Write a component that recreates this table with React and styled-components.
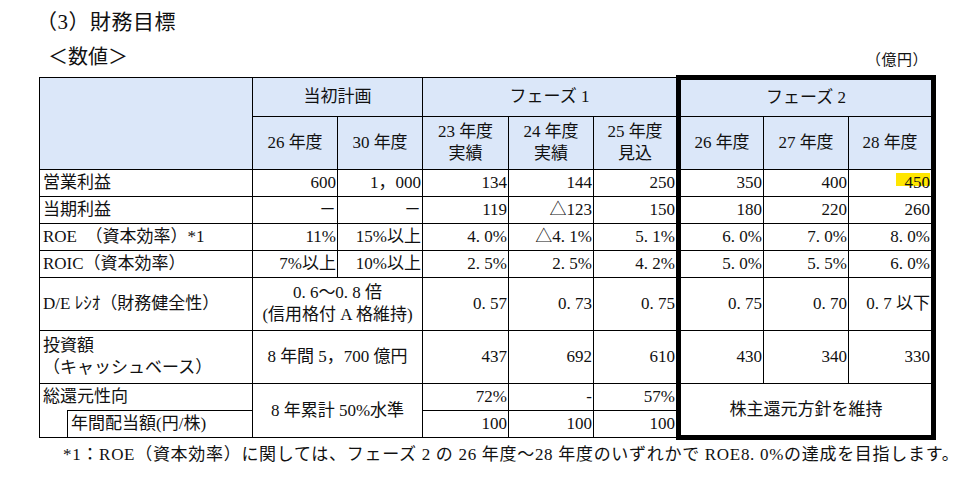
import React from "react";
import styled, { createGlobalStyle, css } from "styled-components";

const Global = createGlobalStyle`
  html, body { margin: 0; padding: 0; background: #fff; }
  body {
    font-family: "Liberation Serif", "Noto Sans CJK JP", serif;
    color: #111;
  }
`;

const Page = styled.div`
  width: 979px;
  height: 488px;
  box-sizing: border-box;
  padding-top: 10px;
  overflow: hidden;
`;

const Title = styled.h2`
  margin: 0 0 0 36px;
  font-weight: normal;
  font-size: 21px;
  line-height: 24px;
  letter-spacing: 0.5px;
`;

const SubRow = styled.div`
  display: flex;
  align-items: flex-end;
  justify-content: space-between;
  margin: 11px 51px 0 48px;
  height: 30px;
`;

const SubTitle = styled.div`
  font-size: 20px;
  line-height: 24px;
  padding-bottom: 6px;
`;

const Unit = styled.div`
  font-size: 15px;
  line-height: 18px;
  padding-bottom: 6px;
  letter-spacing: 0.5px;
`;

const Table = styled.table`
  margin: 0 0 0 39px;
  border-collapse: collapse;
  table-layout: fixed;
  font-size: 17px;
  line-height: 22px;
`;

const thick = css`
  ${(p) => p.$tl && "border-left: 5px solid #000;"}
  ${(p) => p.$tr && "border-right: 5px solid #000;"}
  ${(p) => p.$tt && "border-top: 5px solid #000;"}
  ${(p) => p.$tb && "border-bottom: 5px solid #000;"}
`;

const Th = styled.th`
  background: #dbe7f9;
  border: 1px solid #000;
  font-weight: normal;
  text-align: center;
  padding: 0;
  height: ${(p) => p.$h || 38}px;
  box-sizing: border-box;
  ${thick}
`;

const Td = styled.td`
  border: 1px solid #000;
  padding: 0 ${(p) => (p.$align === "left" ? 3 : 1)}px 0 ${(p) => (p.$align === "left" ? 3 : 1)}px;
  text-align: ${(p) => p.$align || "right"};
  height: ${(p) => p.$h || 26}px;
  white-space: nowrap;
  vertical-align: middle;
  ${(p) => p.$nb && "border-bottom: none;"}
  ${(p) => p.$nt && "border-top: none;"}
  ${thick}
`;

const Highlight = styled.span`
  padding-left: 9px;
  background: linear-gradient(#ffe600 0 68%, transparent 68%);
`;

const Note = styled.p`
  margin: 5px 0 0 63px;
  font-size: 17px;
  line-height: 20px;
  letter-spacing: 0.7px;
`;

const cols = [28, 185, 85, 85, 86, 85, 85, 85, 85, 85];

export default function App() {
  return (
    <Page>
      <Global />
      <Title>（3）財務目標</Title>
      <SubRow>
        <SubTitle>＜数値＞</SubTitle>
        <Unit>（億円）</Unit>
      </SubRow>
      <Table>
        <colgroup>
          {cols.map((w, i) => (
            <col key={i} style={{ width: w }} />
          ))}
        </colgroup>
        <thead>
          <tr>
            <Th colSpan={2} rowSpan={2} />
            <Th colSpan={2} $h={39}>当初計画</Th>
            <Th colSpan={3} $h={39}>フェーズ 1</Th>
            <Th colSpan={3} $h={39} $tt $tl $tr>フェーズ 2</Th>
          </tr>
          <tr>
            <Th $h={53}>26 年度</Th>
            <Th $h={53}>30 年度</Th>
            <Th $h={53}>23 年度<br />実績</Th>
            <Th $h={53}>24 年度<br />実績</Th>
            <Th $h={53}>25 年度<br />見込</Th>
            <Th $h={53} $tl>26 年度</Th>
            <Th $h={53}>27 年度</Th>
            <Th $h={53} $tr>28 年度</Th>
          </tr>
        </thead>
        <tbody>
          <tr>
            <Td colSpan={2} $align="left">営業利益</Td>
            <Td>600</Td>
            <Td>1，000</Td>
            <Td>134</Td>
            <Td>144</Td>
            <Td>250</Td>
            <Td $tl>350</Td>
            <Td>400</Td>
            <Td $tr><Highlight>450</Highlight></Td>
          </tr>
          <tr>
            <Td colSpan={2} $align="left">当期利益</Td>
            <Td>－</Td>
            <Td>－</Td>
            <Td>119</Td>
            <Td>△123</Td>
            <Td>150</Td>
            <Td $tl>180</Td>
            <Td>220</Td>
            <Td $tr>260</Td>
          </tr>
          <tr>
            <Td colSpan={2} $align="left">ROE　（資本効率）*1</Td>
            <Td>11%</Td>
            <Td>15%以上</Td>
            <Td>4. 0%</Td>
            <Td>△4. 1%</Td>
            <Td>5. 1%</Td>
            <Td $tl>6. 0%</Td>
            <Td>7. 0%</Td>
            <Td $tr>8. 0%</Td>
          </tr>
          <tr>
            <Td colSpan={2} $align="left">ROIC（資本効率）</Td>
            <Td>7%以上</Td>
            <Td>10%以上</Td>
            <Td>2. 5%</Td>
            <Td>2. 5%</Td>
            <Td>4. 2%</Td>
            <Td $tl>5. 0%</Td>
            <Td>5. 5%</Td>
            <Td $tr>6. 0%</Td>
          </tr>
          <tr>
            <Td colSpan={2} $align="left" $h={52}>D/E ﾚｼｵ（財務健全性）</Td>
            <Td colSpan={2} $align="center">0. 6〜0. 8 倍<br />(信用格付 A 格維持)</Td>
            <Td>0. 57</Td>
            <Td>0. 73</Td>
            <Td>0. 75</Td>
            <Td $tl>0. 75</Td>
            <Td>0. 70</Td>
            <Td $tr>0. 7 以下</Td>
          </tr>
          <tr>
            <Td colSpan={2} $align="left" $h={52}>投資額<br />（キャッシュベース）</Td>
            <Td colSpan={2} $align="center">8 年間 5，700 億円</Td>
            <Td>437</Td>
            <Td>692</Td>
            <Td>610</Td>
            <Td $tl>430</Td>
            <Td>340</Td>
            <Td $tr>330</Td>
          </tr>
          <tr>
            <Td colSpan={2} $align="left" $nb>総還元性向</Td>
            <Td colSpan={2} rowSpan={2} $align="center">8 年累計 50%水準</Td>
            <Td>72%</Td>
            <Td>-</Td>
            <Td>57%</Td>
            <Td colSpan={3} rowSpan={2} $align="center" $tl $tr $tb>株主還元方針を維持</Td>
          </tr>
          <tr>
            <Td $nt />
            <Td $align="left">年間配当額(円/株)</Td>
            <Td>100</Td>
            <Td>100</Td>
            <Td>100</Td>
          </tr>
        </tbody>
      </Table>
      <Note>*1：ROE（資本効率）に関しては、フェーズ 2 の 26 年度〜28 年度のいずれかで ROE8. 0%の達成を目指します。</Note>
    </Page>
  );
}
